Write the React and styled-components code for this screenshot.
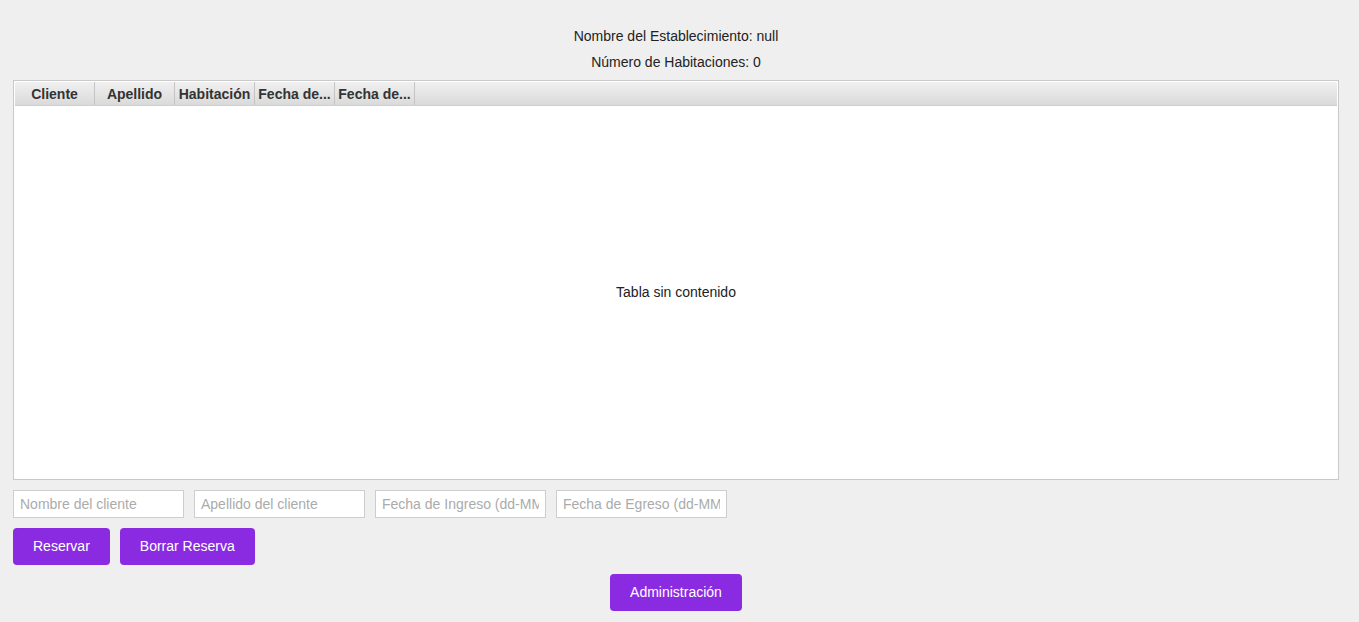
import React from "react";
import styled, { createGlobalStyle } from "styled-components";

const GlobalStyle = createGlobalStyle`
  body {
    margin: 0;
    background: #efefef;
    font-family: "Liberation Sans", Arial, sans-serif;
  }
`;

const Page = styled.div`
  display: flex;
  flex-direction: column;
  padding: 23px 20px 0 13px;
  height: 622px;
  box-sizing: border-box;
  color: #222;
  font-size: 14px;
`;

const InfoLine = styled.div`
  height: 26px;
  line-height: 26px;
  text-align: center;
`;

const TableBox = styled.div`
  margin-top: 5px;
  height: 400px;
  box-sizing: border-box;
  border: 1px solid #c9c9c9;
  background: #fff;
  padding: 1px;
  display: flex;
  flex-direction: column;
`;

const HeaderRow = styled.div`
  display: flex;
  height: 23px;
  flex-shrink: 0;
  background: linear-gradient(#f0f0f0, #dadada);
  border-bottom: 1px solid #cfcfcf;
`;

const HeaderCell = styled.div`
  width: 80px;
  box-sizing: border-box;
  border-right: 1px solid #c4c4c4;
  font-weight: bold;
  color: #333;
  padding-top: 1px;
  line-height: 23px;
  text-align: center;
  white-space: nowrap;
  overflow: hidden;
`;

const EmptyBody = styled.div`
  flex: 1;
  display: flex;
  align-items: center;
  justify-content: center;
`;

const InputRow = styled.div`
  display: flex;
  gap: 10px;
  margin-top: 10px;
`;

const Field = styled.input`
  width: 171px;
  height: 28px;
  box-sizing: border-box;
  border: 1px solid #cdcdcd;
  background: #fff;
  padding: 0 6px;
  font-family: "Liberation Sans", Arial, sans-serif;
  font-size: 14px;
  outline: none;
  &::placeholder {
    color: #ababab;
  }
`;

const ButtonRow = styled.div`
  display: flex;
  gap: 10px;
  margin-top: ${({ $top }) => $top}px;
  justify-content: ${({ $center }) => ($center ? "center" : "flex-start")};
`;

const Button = styled.button`
  height: 37px;
  padding: 0 20px 1px;
  background: #8a2be2;
  border: none;
  border-radius: 4px;
  color: #fff;
  font-family: "Liberation Sans", Arial, sans-serif;
  font-size: 14px;
  cursor: pointer;
`;

const columns = ["Cliente", "Apellido", "Habitación", "Fecha de...", "Fecha de..."];

export default function App() {
  return (
    <>
      <GlobalStyle />
      <Page>
        <InfoLine>Nombre del Establecimiento: null</InfoLine>
        <InfoLine>Número de Habitaciones: 0</InfoLine>
        <TableBox>
          <HeaderRow>
            {columns.map((c, i) => (
              <HeaderCell key={i}>{c}</HeaderCell>
            ))}
          </HeaderRow>
          <EmptyBody>Tabla sin contenido</EmptyBody>
        </TableBox>
        <InputRow>
          <Field placeholder="Nombre del cliente" />
          <Field placeholder="Apellido del cliente" />
          <Field placeholder="Fecha de Ingreso (dd-MM-yyyy)" />
          <Field placeholder="Fecha de Egreso (dd-MM-yyyy)" />
        </InputRow>
        <ButtonRow $top={10}>
          <Button>Reservar</Button>
          <Button>Borrar Reserva</Button>
        </ButtonRow>
        <ButtonRow $top={9} $center>
          <Button>Administración</Button>
        </ButtonRow>
      </Page>
    </>
  );
}
